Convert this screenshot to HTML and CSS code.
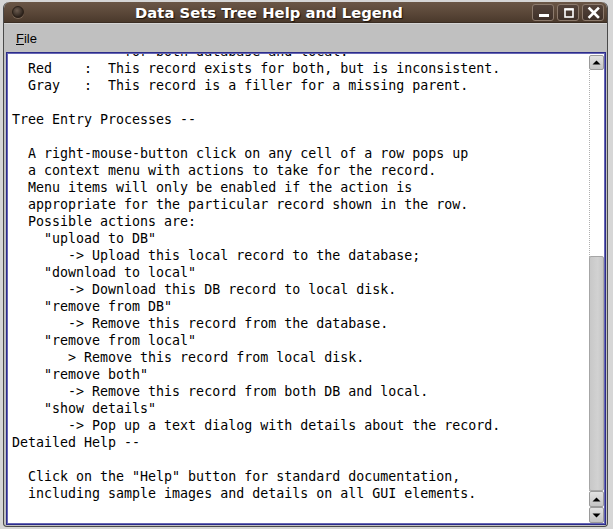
FILE: index.html
```html
<!DOCTYPE html>
<html>
<head>
<meta charset="utf-8">
<title>Data Sets Tree Help and Legend</title>
<link rel="stylesheet" href="styles.css">
</head>
<body>
<div class="window">
  <div class="titlebar">
    <span class="menu-dot"></span>
    <span class="title">Data Sets Tree Help and Legend</span>
    <div class="wm-buttons">
      <span class="wm-btn"><svg width="19" height="14" viewBox="0 0 19 14"><rect x="5" y="9" width="10" height="3" fill="#fff"/></svg></span>
      <span class="wm-btn"><svg width="19" height="14" viewBox="0 0 19 14"><rect x="6" y="4" width="8" height="8" fill="none" stroke="#fff" stroke-width="1.6"/><rect x="5.5" y="3.5" width="9" height="2" fill="#fff"/></svg></span>
      <span class="wm-btn"><svg width="19" height="14" viewBox="0 0 19 14"><path d="M5.5 3.5 L14 12 M14 3.5 L5.5 12" stroke="#fff" stroke-width="2.6" stroke-linecap="square"/></svg></span>
    </div>
  </div>
  <div class="menubar"><span class="menu-item"><span class="mnemonic">F</span>ile</span></div>
  <div class="scrollpane">
    <div class="viewport">
<pre class="text">              for both database and local.
  Red    :  This record exists for both, but is inconsistent.
  Gray   :  This record is a filler for a missing parent.

Tree Entry Processes --

  A right-mouse-button click on any cell of a row pops up
  a context menu with actions to take for the record.
  Menu items will only be enabled if the action is
  appropriate for the particular record shown in the row.
  Possible actions are:
    "upload to DB"
       -&gt; Upload this local record to the database;
    "download to local"
       -&gt; Download this DB record to local disk.
    "remove from DB"
       -&gt; Remove this record from the database.
    "remove from local"
       &gt; Remove this record from local disk.
    "remove both"
       -&gt; Remove this record from both DB and local.
    "show details"
       -&gt; Pop up a text dialog with details about the record.
Detailed Help --

  Click on the "Help" button for standard documentation,
  including sample images and details on all GUI elements.
</pre>
    </div>
    <div class="vscroll">
      <div class="arrow"><svg width="13" height="13" viewBox="0 0 13 13"><path d="M2.5 8.5 L6.5 4.5 L10.5 8.5 Z" fill="#000"/></svg></div>
      <div class="track"><div class="thumb"></div></div>
      <div class="arrow arrow-low"><svg width="13" height="13" viewBox="0 0 13 13"><path d="M2.5 8.5 L6.5 4.5 L10.5 8.5 Z" fill="#000"/></svg></div>
      <div class="arrow arrow-low"><svg width="13" height="13" viewBox="0 0 13 13"><path d="M2.5 4.5 L6.5 8.5 L10.5 4.5 Z" fill="#000"/></svg></div>
    </div>
  </div>
</div>
</body>
</html>
```

FILE: styles.css
```css
html, body {
  margin: 0;
  padding: 0;
}
body {
  width: 613px;
  height: 529px;
  overflow: hidden;
  background: #d6d6d6;
}
.window {
  box-sizing: border-box;
  margin: 2px 0 0 3px;
  width: 605px;
  height: 525px;
  background: #c0c0c0;
  border: 1px solid #4a4a4a;
  border-top: 0;
  border-radius: 6px 6px 4px 4px;
  display: flex;
  flex-direction: column;
  overflow: hidden;
}
.titlebar {
  height: 21px;
  flex: none;
  display: flex;
  align-items: center;
  background: linear-gradient(#6a5646, #5a4738 55%, #4a392c);
  border-bottom: 1px solid #3a2d23;
  box-sizing: border-box;
  border-radius: 6px 6px 0 0;
}
.menu-dot {
  width: 10px;
  height: 10px;
  margin-left: 8px;
  border-radius: 50%;
  background: radial-gradient(circle at 40% 35%, #6c5c50, #2e241d 70%);
  border: 1px solid #2a2019;
  box-shadow: 0 1px 0 #7a6656;
  flex: none;
}
.title {
  flex: 1;
  text-align: center;
  padding-right: 18px;
  font-family: "DejaVu Sans", sans-serif;
  font-weight: bold;
  font-size: 14.8px;
  color: #ffffff;
  text-shadow: 1px 1px 1px #1a120c;
  white-space: nowrap;
}
.wm-buttons {
  display: flex;
  gap: 3px;
  padding-right: 3px;
  flex: none;
}
.wm-btn {
  box-sizing: border-box;
  width: 22px;
  height: 17px;
  display: flex;
  align-items: center;
  justify-content: center;
  border: 1px solid #8c7a6c;
  border-radius: 3px;
  background: linear-gradient(#54433a, #3e3028);
}
.menubar {
  height: 29px;
  flex: none;
  display: flex;
  align-items: center;
  padding-left: 12px;
  background: #c0c0c0;
  border-top: 1px solid #d4d4d4;
  box-sizing: border-box;
}
.menu-item {
  font-family: "Liberation Sans", sans-serif;
  font-size: 13px;
  color: #000;
}
.mnemonic {
  text-decoration: underline;
}
.scrollpane {
  box-sizing: border-box;
  height: 473px;
  margin: 0 1px 0 2px;
  flex: none;
  display: flex;
  border: 1px solid #2c2c8a;
  box-shadow: inset 0 0 0 1px #6666b4;
  padding: 1px;
  background: #ffffff;
}
.viewport {
  flex: 1;
  overflow: hidden;
  background: #fff;
  padding-left: 4px;
}
.text {
  margin: -11px 0 0 0;
  font-family: "DejaVu Sans Mono", monospace;
  font-size: 13.3px;
  line-height: 17px;
  color: #000;
}
.vscroll {
  width: 15px;
  flex: none;
  display: flex;
  flex-direction: column;
  padding-top: 1px;
  background: #fff;
}
.arrow {
  box-sizing: border-box;
  height: 15px;
  flex: none;
  display: flex;
  align-items: center;
  justify-content: center;
  background: linear-gradient(#e2e2e2, #c4c4c4);
  border: 1px solid #9a9a9a;
  border-radius: 2px;
}
.arrow-low {
  height: 16px;
}
.track {
  flex: 1;
  border-left: 1px dotted #b0b0b0;
  display: flex;
  flex-direction: column;
  justify-content: flex-end;
}
.thumb {
  box-sizing: border-box;
  height: 235px;
  margin-left: -1px;
  background: linear-gradient(90deg, #c8c8c8, #d2d2d2 60%, #c4c4c4);
  border: 1px solid #a6a6a6;
  border-radius: 2px;
}
```
